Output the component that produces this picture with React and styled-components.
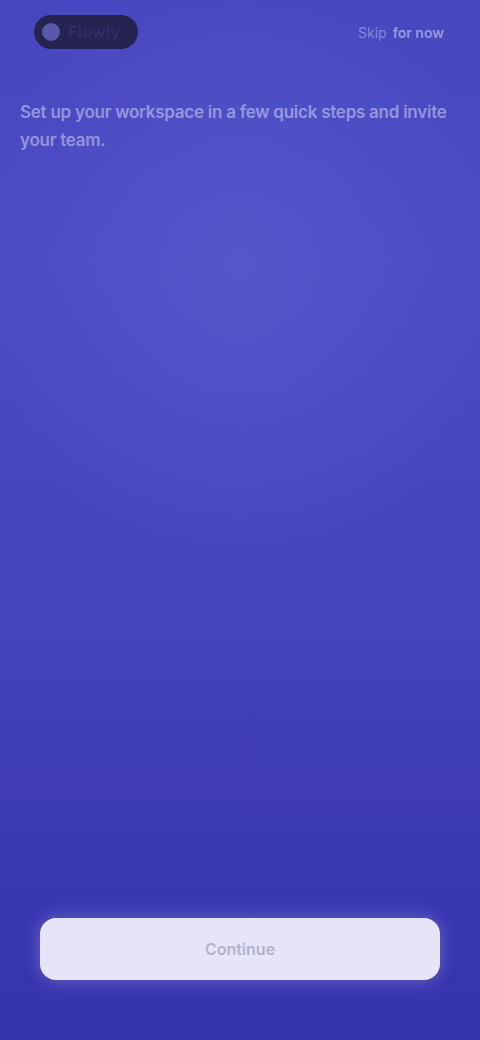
import React from "react";
import styled, { createGlobalStyle } from "styled-components";

const Global = createGlobalStyle`
  html, body { margin: 0; padding: 0; }
  body { font-family: "Inter", "Liberation Sans", sans-serif; }
`;

const Screen = styled.div`
  width: 480px;
  height: 1040px;
  display: flex;
  flex-direction: column;
  box-sizing: border-box;
  padding: 14px 20px 60px;
  background:
    radial-gradient(ellipse 260px 300px at 240px 270px, rgba(96, 94, 208, 0.55), rgba(96, 94, 208, 0) 100%),
    linear-gradient(180deg, #4947c0 0%, #4d4bc3 25%, #4644bc 60%, #3a37b2 85%, #3633ae 100%);
  overflow: hidden;
`;

const TopBar = styled.div`
  display: flex;
  align-items: center;
  justify-content: space-between;
  height: 36px;
  padding: 0 16px 0 14px;
`;

const Logo = styled.div`
  display: flex;
  align-items: center;
  gap: 8px;
  height: 34px;
  padding: 0 18px 0 8px;
  border-radius: 17px;
  background: #25234f;
`;

const LogoMark = styled.span`
  width: 18px;
  height: 18px;
  border-radius: 50%;
  background: #5a58a8;
`;

const LogoText = styled.span`
  font-size: 16px;
  font-weight: 700;
  color: #2f2d68;
  letter-spacing: 0.2px;
`;

const SkipLink = styled.button`
  border: 0;
  background: none;
  padding: 0;
  font-family: inherit;
  font-size: 14px;
  color: rgba(255, 255, 255, 0.35);
  display: flex;
  gap: 6px;
`;

const Accent = styled.span`
  color: rgba(255, 255, 255, 0.45);
  font-weight: 600;
`;

const Heading = styled.h1`
  margin: 48px 0 0;
  padding: 0;
  font-size: 17px;
  line-height: 28px;
  font-weight: 600;
  letter-spacing: -0.25px;
  color: rgba(255, 255, 255, 0.42);
`;

const Spacer = styled.div`
  flex: 1;
`;

const PrimaryButton = styled.button`
  margin: 0 20px;
  height: 62px;
  border: 0;
  border-radius: 16px;
  background: #e5e5f7;
  font-family: inherit;
  font-size: 16px;
  font-weight: 600;
  color: #b3b2cc;
  box-shadow: 0 0 18px rgba(255, 255, 255, 0.25);
`;

export default function App() {
  return (
    <>
      <Global />
      <Screen>
        <TopBar>
          <Logo>
            <LogoMark />
            <LogoText>Flowly</LogoText>
          </Logo>
          <SkipLink>
            Skip <Accent>for now</Accent>
          </SkipLink>
        </TopBar>
        <Heading>
          Set up your workspace in a few quick steps and invite your team.
        </Heading>
        <Spacer />
        <PrimaryButton>Continue</PrimaryButton>
      </Screen>
    </>
  );
}
